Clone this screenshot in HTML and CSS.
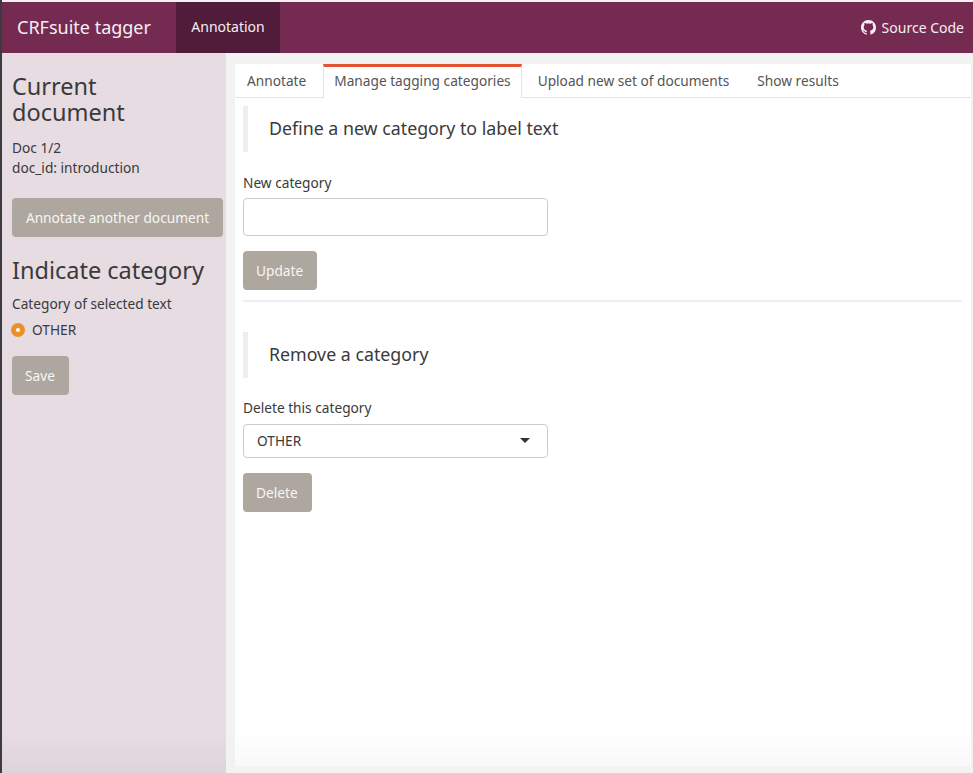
FILE: index.html
```html
<!DOCTYPE html>
<html>

<head>
  <meta charset="utf-8">
  <title>CRFsuite tagger</title>
  <link rel="stylesheet" href="styles.css">
</head>

<body>
  <div class="navbar">
    <div class="brand">CRFsuite tagger</div>
    <a class="nav-item active">Annotation</a>
    <a class="nav-source">
      <svg class="github" viewBox="0 0 16 16" width="15" height="15"><path fill="currentColor" d="M8 0C3.58 0 0 3.58 0 8c0 3.54 2.29 6.53 5.47 7.59.4.07.55-.17.55-.38 0-.19-.01-.82-.01-1.49-2.01.37-2.53-.49-2.69-.94-.09-.23-.48-.94-.82-1.13-.28-.15-.68-.52-.01-.53.63-.01 1.08.58 1.23.82.72 1.21 1.87.87 2.33.66.07-.52.28-.87.51-1.07-1.78-.2-3.64-.89-3.64-3.95 0-.87.31-1.59.82-2.15-.08-.2-.36-1.02.08-2.12 0 0 .67-.21 2.2.82.64-.18 1.32-.27 2-.27s1.36.09 2 .27c1.53-1.04 2.2-.82 2.2-.82.44 1.1.16 1.92.08 2.12.51.56.82 1.27.82 2.15 0 3.07-1.87 3.75-3.65 3.95.29.25.54.73.54 1.48 0 1.07-.01 1.93-.01 2.2 0 .21.15.46.55.38A8.01 8.01 0 0 0 16 8c0-4.42-3.58-8-8-8z"/></svg>
      Source Code
    </a>
  </div>

  <div class="content">
    <div class="sidebar">
      <h3 class="side-title">Current<br>document</h3>
      <p class="side-text">Doc 1/2<br>doc_id: introduction</p>
      <button class="btn btn-wide">Annotate another document</button>
      <h3 class="side-title second">Indicate category</h3>
      <div class="side-label">Category of selected text</div>
      <div class="radio-row"><span class="radio"></span>OTHER</div>
      <button class="btn">Save</button>
    </div>

    <div class="main">
      <div class="card">
        <ul class="tabs">
          <li class="first">Annotate</li>
          <li class="selected">Manage tagging categories</li>
          <li>Upload new set of documents</li>
          <li>Show results</li>
        </ul>
        <div class="pane">
          <blockquote class="section-title">Define a new category to label text</blockquote>
          <label class="field-label">New category</label>
          <input class="text-input" type="text">
          <button class="btn">Update</button>
          <hr class="rule">
          <blockquote class="section-title remove">Remove a category</blockquote>
          <label class="field-label">Delete this category</label>
          <div class="select">OTHER<span class="caret"></span></div>
          <button class="btn">Delete</button>
        </div>
      </div>
    </div>
  </div>
</body>
</html>
```

FILE: styles.css
```css
html, body
{
   margin:0;
   height:773px;
   overflow:hidden;
}
body
{
   font-family: "Noto Sans", sans-serif;
   font-size:13.7px;
   color:#3a3a3a;
   background:#f2f2f2;
   border-left:2px solid #3c3c40;
   box-sizing:border-box;
   display:flex;
   flex-direction:column;
   padding-top:2px;
}

.navbar
{
   height:51px;
   background:#752b51;
   color:#f4eef1;
   display:flex;
   align-items:stretch;
   flex:none;
}
.brand
{
   font-size:18px;
   line-height:51px;
   margin-left:15px;
   width:159px;
}
.nav-item
{
   width:104px;
   text-align:center;
   line-height:50px;
   font-size:14px;
}
.nav-item.active
{
   background:#501c39;
}
.nav-source
{
   margin-left:auto;
   margin-right:9px;
   line-height:50px;
   font-size:14px;
   display:flex;
   align-items:center;
   gap:6px;
}

.content
{
   flex:1;
   display:flex;
   min-height:0;
}
.sidebar
{
   width:224px;
   background:linear-gradient(#e6dce2 680px, #ddd4d9);
   padding:20px 3px 0 10px;
   box-sizing:border-box;
   flex:none;
}
.side-title
{
   font-size:23.5px;
   font-weight:400;
   line-height:26px;
   margin:0;
}
.side-title.second
{
   margin-top:20px;
}
.side-text
{
   margin:13px 0 20px;
   line-height:20px;
}
.side-label
{
   margin-top:11px;
   line-height:20px;
}
.radio-row
{
   display:flex;
   align-items:center;
   gap:7px;
   line-height:20px;
   margin:6px 0 16px -1px;
}
.radio
{
   width:14px;
   height:14px;
   border-radius:50%;
   background:#e9902a;
   display:flex;
   align-items:center;
   justify-content:center;
}
.radio::after
{
   content:"";
   width:4px;
   height:4px;
   border-radius:50%;
   background:white;
}

.btn
{
   display:block;
   height:39px;
   padding:0 14px 0 13px;
   background:#aea79f;
   border:0;
   border-radius:4px;
   color:#f8f6f4;
   font-family:inherit;
   font-size:13.7px;
}
.btn-wide
{
   width:211px;
   padding:0;
}

.main
{
   flex:1;
   padding:11px 2px 6px 9px;
   min-width:0;
}
.card
{
   height:100%;
   background:linear-gradient(white 670px, #f8f8f8);
   box-sizing:border-box;
   border-radius:2px;
}
.tabs
{
   list-style:none;
   margin:0;
   padding:0;
   display:flex;
   height:33px;
   border-bottom:1px solid #e4e4e4;
   color:#555555;
}
.tabs li
{
   padding:0 14px;
   line-height:34px;
}
.tabs li.first
{
   padding:0 17px 0 12px;
}
.tabs li.selected
{
   height:31px;
   line-height:28px;
   border:1px solid #e4e4e4;
   border-top:3px solid #e0552f;
   border-bottom:0;
   padding:0 10px;
   background:white;
   margin-right:2px;
}
.pane
{
   padding:8px 9px 0 8px;
}
.section-title
{
   margin:0 0 21px;
   height:46px;
   line-height:45px;
   border-left:5px solid #eeeeee;
   padding-left:21px;
   font-size:17.8px;
}
.section-title.remove
{
   margin-top:30px;
   margin-bottom:20px;
}
.field-label
{
   display:block;
   line-height:20px;
   margin-bottom:5px;
}
.text-input
{
   display:block;
   width:305px;
   height:38px;
   box-sizing:border-box;
   border:1px solid #cccccc;
   border-radius:4px;
   margin-bottom:15px;
}
.rule
{
   border:0;
   border-top:2px solid #eeeeee;
   margin:10px 0 0;
}
.select
{
   width:305px;
   height:34px;
   box-sizing:border-box;
   border:1px solid #cccccc;
   border-radius:4px;
   padding:0 13px;
   line-height:32px;
   margin:6px 0 15px;
   position:relative;
}
.caret
{
   position:absolute;
   right:17px;
   top:13px;
   border-left:5px solid transparent;
   border-right:5px solid transparent;
   border-top:5px solid #333333;
}
```
